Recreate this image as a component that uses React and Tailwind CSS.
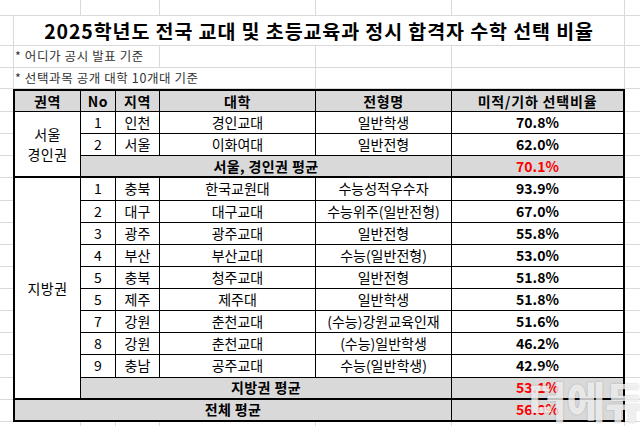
import React from "react";

const rows = [
  ["1", "충북", "한국교원대", "수능성적우수자", "93.9%"],
  ["2", "대구", "대구교대", "수능위주(일반전형)", "67.0%"],
  ["3", "광주", "광주교대", "일반전형", "55.8%"],
  ["4", "부산", "부산교대", "수능(일반전형)", "53.0%"],
  ["5", "충북", "청주교대", "일반전형", "51.8%"],
  ["5", "제주", "제주대", "일반학생", "51.8%"],
  ["7", "강원", "춘천교대", "(수능)강원교육인재", "51.6%"],
  ["8", "강원", "춘천교대", "(수능)일반학생", "46.2%"],
  ["9", "충남", "공주교대", "수능(일반학생)", "42.9%"],
];

// light excel gridline cells
const Gutter = () => <div className="border-b border-[#dadada]" />;
const Grid = ({ className = "" }) => (
  <div className={`border-b border-r border-[#dadada] ${className}`} />
);

const Cell = ({ className = "", children }) => (
  <div
    className={`flex items-center justify-center border-b border-r border-black whitespace-nowrap overflow-hidden ${className}`}
  >
    {children}
  </div>
);

const App = () => {
  return (
    <div className="relative w-[640px] h-[426px] bg-white overflow-hidden font-['Noto_Sans_CJK_KR',sans-serif] text-black">
      <div className="grid grid-cols-[13px_68px_35px_44px_156px_136px_173px_15px] grid-rows-[16px_30px_22px_21px_23px_repeat(14,22.14px)_4px]">
        {/* row 1 */}
        <Gutter />
        <Grid />
        <Grid className="col-span-2" />
        <Grid />
        <Grid />
        <Grid />
        <Gutter />

        {/* title */}
        <Gutter />
        <div className="col-span-6 flex items-center justify-center border-b border-x border-[#dadada] text-[19.5px] font-bold tracking-[0.9px] whitespace-nowrap">
          2025학년도 전국 교대 및 초등교육과 정시 합격자 수학 선택 비율
        </div>
        <Gutter />

        {/* notes */}
        <Gutter />
        <div className="col-span-3 flex items-center pl-[1px] border-b border-r border-[#dadada] border-l text-[12.5px] tracking-[0.6px] text-[#333] whitespace-nowrap">
          * 어디가 공시 발표 기준
        </div>
        <Grid />
        <Grid />
        <Grid />
        <Gutter />

        <Gutter />
        <div className="col-span-4 flex items-center pl-[1px] border-b border-r border-[#dadada] border-l text-[12.5px] tracking-[0.6px] text-[#333] whitespace-nowrap">
          * 선택과목 공개 대학 10개대 기준
        </div>
        <Grid />
        <Grid />
        <Gutter />

        {/* header */}
        <Gutter />
        <Cell className="border-t-2 border-l-2 bg-[#d9d9d9] font-bold text-[14px] tracking-[0.6px]">권역</Cell>
        <Cell className="border-t-2 bg-[#d9d9d9] font-bold text-[14px] tracking-[0.6px]">No</Cell>
        <Cell className="border-t-2 bg-[#d9d9d9] font-bold text-[14px] tracking-[0.6px]">지역</Cell>
        <Cell className="border-t-2 bg-[#d9d9d9] font-bold text-[14px] tracking-[0.6px]">대학</Cell>
        <Cell className="border-t-2 bg-[#d9d9d9] font-bold text-[14px] tracking-[0.6px]">전형명</Cell>
        <Cell className="border-t-2 border-r-2 bg-[#d9d9d9] font-bold text-[14px] tracking-[0.8px]">미적/기하 선택비율</Cell>
        <Gutter />

        {/* 서울 경인권 */}
        <Gutter />
        <Cell className="row-span-3 border-l-2 border-b-2 flex-col leading-[20px] text-[14px] tracking-[0.4px]">
          <span>서울</span>
          <span>경인권</span>
        </Cell>
        <Cell className="text-[14px]">1</Cell>
        <Cell className="text-[14px]">인천</Cell>
        <Cell className="text-[14px]">경인교대</Cell>
        <Cell className="text-[14px]">일반학생</Cell>
        <Cell className="border-r-2 text-[14px] font-bold">70.8%</Cell>
        <Gutter />

        <Gutter />
        <Cell className="text-[14px]">2</Cell>
        <Cell className="text-[14px]">서울</Cell>
        <Cell className="text-[14px]">이화여대</Cell>
        <Cell className="text-[14px]">일반전형</Cell>
        <Cell className="border-r-2 text-[14px] font-bold">62.0%</Cell>
        <Gutter />

        <Gutter />
        <Cell className="col-span-4 border-b-2 bg-[#d9d9d9] text-[14px] font-bold tracking-[0.4px]">서울, 경인권 평균</Cell>
        <Cell className="border-b-2 border-r-2 bg-[#d9d9d9] text-[14px] font-bold text-[#ff0000]">70.1%</Cell>
        <Gutter />

        {/* 지방권 */}
        {rows.map((r, i) => (
          <React.Fragment key={i}>
            <Gutter />
            {i === 0 && (
              <Cell className="row-span-10 border-l-2 border-b-2 text-[14px] tracking-[0.4px]">지방권</Cell>
            )}
            <Cell className="text-[14px]">{r[0]}</Cell>
            <Cell className="text-[14px]">{r[1]}</Cell>
            <Cell className="text-[14px]">{r[2]}</Cell>
            <Cell className="text-[14px]">{r[3]}</Cell>
            <Cell className="border-r-2 text-[14px] font-bold">{r[4]}</Cell>
            <Gutter />
          </React.Fragment>
        ))}

        <Gutter />
        <Cell className="col-span-4 border-b-2 bg-[#d9d9d9] text-[14px] font-bold tracking-[0.4px]">지방권 평균</Cell>
        <Cell className="border-b-2 border-r-2 bg-[#d9d9d9] text-[14px] font-bold text-[#ff0000]">53.1%</Cell>
        <Gutter />

        {/* 전체 */}
        <Gutter />
        <Cell className="col-span-5 border-l-2 border-b-2 bg-[#d9d9d9] text-[14px] font-bold tracking-[0.4px]">전체 평균</Cell>
        <Cell className="border-b-2 border-r-2 bg-[#d9d9d9] text-[14px] font-bold text-[#ff0000]">56.0%</Cell>
        <Gutter />

        {/* bottom partial row */}
        <div />
        <div className="border-r border-[#dadada]" />
        <div className="border-r border-[#dadada]" />
        <div className="border-r border-[#dadada]" />
        <div className="border-r border-[#dadada]" />
        <div className="border-r border-[#dadada]" />
        <div className="border-r border-[#dadada]" />
        <div />
      </div>

      {/* watermark */}
      <div className="absolute left-[528px] top-[367px] flex flex-col items-start pointer-events-none">
        <span className="ml-[4px] text-[7px] leading-[9px] text-white/80 whitespace-nowrap">더 바른 교육, 더 나은 미래</span>
        <span className="text-[42px] font-black leading-[48px] text-white/75 tracking-[0px] whitespace-nowrap [text-shadow:0_0_2px_rgba(0,0,0,0.25)]">
          더에듀
        </span>
      </div>
    </div>
  );
};

export default App;
